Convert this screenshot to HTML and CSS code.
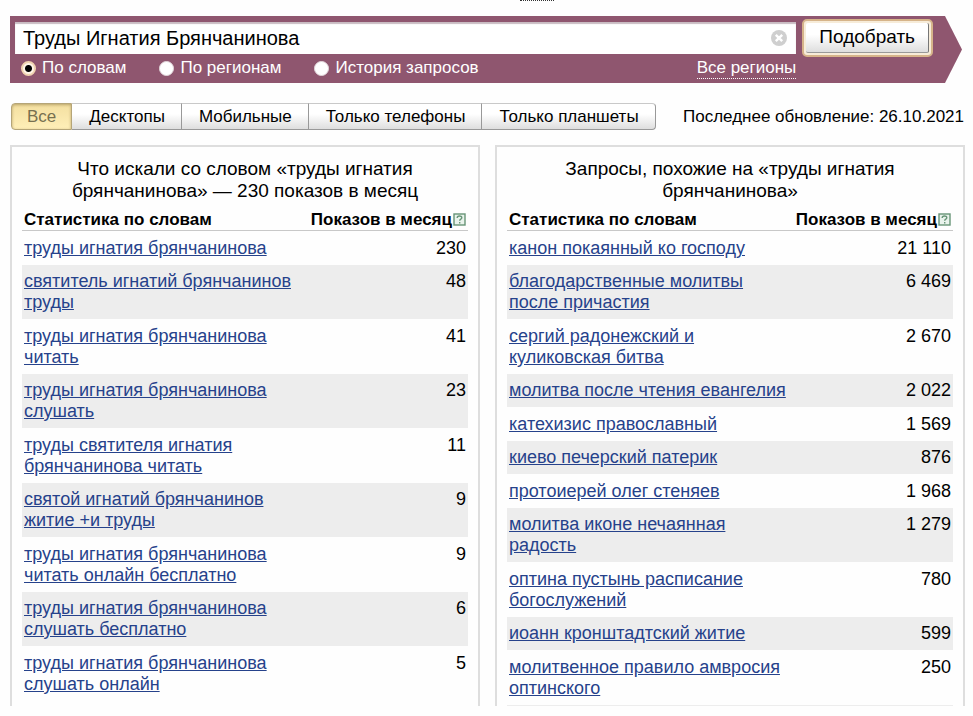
FILE: index.html
```html
<!DOCTYPE html>
<html lang="ru">

<head>
    <meta charset="UTF-8">
    <meta name="viewport" content="width=device-width, initial-scale=1.0">
    <title>Подбор слов</title>
    <link rel="stylesheet" href="styles.css">
</head>
<body>
    <div class="top-line"></div>

    <form class="search">
        <div class="search-main">
            <div class="search-box">
                <input class="search-input" type="text" aria-label="Запрос" value="Труды Игнатия Брянчанинова">
                <button class="clear" type="reset" aria-label="Очистить">
                    <svg width="16" height="16" viewBox="0 0 16 16">
                        <circle cx="8" cy="8" r="8" fill="#cfcfcf"/>
                        <path d="M4.8 4.8l6.4 6.4M11.2 4.8l-6.4 6.4" stroke="#fff" stroke-width="2.4"/>
                    </svg>
                </button>
            </div>
            <div class="options">
                <label class="option"><input type="radio" name="type" checked>По словам</label>
                <label class="option"><input type="radio" name="type">По регионам</label>
                <label class="option"><input type="radio" name="type">История запросов</label>
                <a class="regions" href="#">Все регионы</a>
            </div>
        </div>
        <button class="submit" type="submit"><span>Подобрать</span></button>
    </form>

    <div class="toolbar">
        <div class="tabs">
            <button class="tab active" type="button">Все</button>
            <button class="tab" type="button">Десктопы</button>
            <button class="tab" type="button">Мобильные</button>
            <button class="tab" type="button">Только телефоны</button>
            <button class="tab" type="button">Только планшеты</button>
        </div>
        <div class="updated">Последнее обновление: 26.10.2021</div>
    </div>

    <div class="panels">
        <div class="panel">
            <h2>Что искали со словом «труды игнатия брянчанинова» — 230 показов в месяц</h2>
            <table>
                <thead>
                    <tr>
                        <th colspan="2"><div class="head"><span>Статистика по словам</span><span class="shows">Показов в месяц<svg class="help" width="13" height="13" viewBox="0 0 13 13"><rect x="1" y="1" width="11" height="11" fill="#e9f3ec" stroke="#679477" stroke-width="1.4"/><path d="M4.2 5c0-2.6 4.6-2.6 4.6-.3 0 1.5-2.1 1.4-2.1 3M6.7 9v1.4" fill="none" stroke="#679477" stroke-width="1.4"/></svg></span></div></th>
                    </tr>
                </thead>
                <tbody>
                    <tr><td><a href="#">труды игнатия брянчанинова</a></td><td>230</td></tr>
                    <tr><td><a href="#">святитель игнатий брянчанинов труды</a></td><td>48</td></tr>
                    <tr><td><a href="#">труды игнатия брянчанинова читать</a></td><td>41</td></tr>
                    <tr><td><a href="#">труды игнатия брянчанинова слушать</a></td><td>23</td></tr>
                    <tr><td><a href="#">труды святителя игнатия брянчанинова читать</a></td><td>11</td></tr>
                    <tr><td><a href="#">святой игнатий брянчанинов житие +и труды</a></td><td>9</td></tr>
                    <tr><td><a href="#">труды игнатия брянчанинова читать онлайн бесплатно</a></td><td>9</td></tr>
                    <tr><td><a href="#">труды игнатия брянчанинова слушать бесплатно</a></td><td>6</td></tr>
                    <tr><td><a href="#">труды игнатия брянчанинова слушать онлайн</a></td><td>5</td></tr>
                </tbody>
            </table>
        </div>
        <div class="panel">
            <h2>Запросы, похожие на «труды игнатия брянчанинова»</h2>
            <table class="similar">
                <thead>
                    <tr>
                        <th colspan="2"><div class="head"><span>Статистика по словам</span><span class="shows">Показов в месяц<svg class="help" width="13" height="13" viewBox="0 0 13 13"><rect x="1" y="1" width="11" height="11" fill="#e9f3ec" stroke="#679477" stroke-width="1.4"/><path d="M4.2 5c0-2.6 4.6-2.6 4.6-.3 0 1.5-2.1 1.4-2.1 3M6.7 9v1.4" fill="none" stroke="#679477" stroke-width="1.4"/></svg></span></div></th>
                    </tr>
                </thead>
                <tbody>
                    <tr><td><a href="#">канон покаянный ко господу</a></td><td>21 110</td></tr>
                    <tr><td><a href="#">благодарственные молитвы после причастия</a></td><td>6 469</td></tr>
                    <tr><td><a href="#">сергий радонежский и куликовская битва</a></td><td>2 670</td></tr>
                    <tr><td><a href="#">молитва после чтения евангелия</a></td><td>2 022</td></tr>
                    <tr><td><a href="#">катехизис православный</a></td><td>1 569</td></tr>
                    <tr><td><a href="#">киево печерский патерик</a></td><td>876</td></tr>
                    <tr><td><a href="#">протоиерей олег стеняев</a></td><td>1 968</td></tr>
                    <tr><td><a href="#">молитва иконе нечаянная радость</a></td><td>1 279</td></tr>
                    <tr><td><a href="#">оптина пустынь расписание богослужений</a></td><td>780</td></tr>
                    <tr><td><a href="#">иоанн кронштадтский житие</a></td><td>599</td></tr>
                    <tr><td><a href="#">молитвенное правило амвросия оптинского</a></td><td>250</td></tr>
                </tbody>
            </table>
        </div>
    </div>
</body>

</html>
```
FILE: styles.css
```css
* {
    box-sizing: border-box;
}

body {
    font-family: "Liberation Sans", Arial, sans-serif;
    font-size: 18px;
    line-height: 22px;
    margin: 0;
    padding: 0 8px 10px 10px;
    background-color: #fefefe;
    color: #000;
}

button, input {
    font: inherit;
    color: inherit;
    margin: 0;
}

.top-line {
    width: 34px;
    height: 16px;
    margin-left: 510px;
    border-top: 1px dotted #333;
}

.search {
    display: flex;
    align-items: flex-start;
    gap: 6px;
    height: 67px;
    margin-right: 3px;
    padding: 3px 29px 0 5px;
    background-color: #8f566f;
    clip-path: polygon(0 0, calc(100% - 17px) 0, 100% 50%, calc(100% - 17px) 100%, 0 100%);
}

.search-main {
    flex: 1;
    padding-top: 3px;
}

.search-box {
    display: flex;
    align-items: center;
    height: 32px;
    padding: 0 9px 0 8px;
    background-color: #fff;
    box-shadow: inset 0 2px 1px #c9bcc2;
}

.search-input {
    flex: 1;
    height: 28px;
    padding: 0;
    border: none;
    outline: none;
    background: none;
    font-size: 20px;
}

.clear {
    display: flex;
    padding: 0;
    border: none;
    background: none;
}

.options {
    display: flex;
    align-items: center;
    padding: 3px 0 0 6px;
    color: #fff;
    font-size: 17px;
}

.option {
    display: flex;
    align-items: center;
    gap: 6px;
    margin-right: 33px;
}

.option input {
    appearance: none;
    width: 15px;
    height: 15px;
    border: 1px solid #e3d8dc;
    border-radius: 50%;
    background-color: #fff;
}

.option input:checked {
    border: 2px solid #f0d3b0;
    background: radial-gradient(circle, #000 0, #000 3px, #fff5e8 4px);
}

.regions {
    margin-left: auto;
    border-bottom: 1px dotted #fff;
    color: #fff;
    line-height: 21px;
    text-decoration: none;
}

.submit {
    padding: 2px;
    border: 2px solid #d6b48a;
    border-radius: 5px;
    background-color: #f7ecd9;
}

.submit span {
    display: block;
    padding: 3px 13px 4px;
    border-right: 1px solid #777;
    border-bottom: 1px solid #999;
    border-radius: 2px;
    background: linear-gradient(#fff 40%, #dedede);
    font-size: 19px;
    line-height: 22px;
}

.toolbar {
    display: flex;
    align-items: center;
    justify-content: space-between;
    margin: 20px 1px 0;
}

.tabs {
    display: flex;
}

.tab {
    height: 27px;
    padding: 0 16px 0 17px;
    border: 1px solid #c9c9c9;
    border-right-color: #999;
    border-bottom-color: #999;
    border-left: none;
    background: linear-gradient(#fff 40%, #dedede);
    font-size: 17px;
    line-height: 24px;
}

.tab.active {
    padding: 0 15px;
    border: 1px solid #b5a578;
    border-radius: 4px 0 0 4px;
    background: linear-gradient(#f3dfa0, #ffefb8);
    box-shadow: inset 0 1px 3px #b7a26a;
    color: #77704f;
}

.tab:last-child {
    border-radius: 0 4px 4px 0;
}

.updated {
    font-size: 17px;
}

.panels {
    display: grid;
    grid-template-columns: 1fr 1fr;
    gap: 15px;
    margin-top: 15px;
}

.panel {
    padding: 11px 10px 0;
    border: 2px solid #dedede;
    border-bottom: none;
}

h2 {
    margin: 0 auto;
    max-width: 370px;
    font-size: 19px;
    font-weight: normal;
    text-align: center;
}

table {
    width: 100%;
    margin-top: 7px;
    border-collapse: collapse;
    font-size: 18px;
    line-height: 21px;
}

th {
    padding: 0 2px;
    border-bottom: 1px solid #c8c8c8;
    font-size: 17px;
    text-align: left;
}

.head {
    display: flex;
    justify-content: space-between;
}

.shows {
    display: flex;
    align-items: center;
    gap: 1px;
}

td {
    padding: 7px 2px 6px;
    vertical-align: top;
}

td:first-child {
    width: 64%;
}

td:last-child {
    text-align: right;
}

tbody tr:nth-child(even) td {
    padding-top: 6px;
    background-color: #ededed;
}

.similar {
    border-bottom: 1px solid #ededed;
}

td a {
    color: #26428b;
}
```
